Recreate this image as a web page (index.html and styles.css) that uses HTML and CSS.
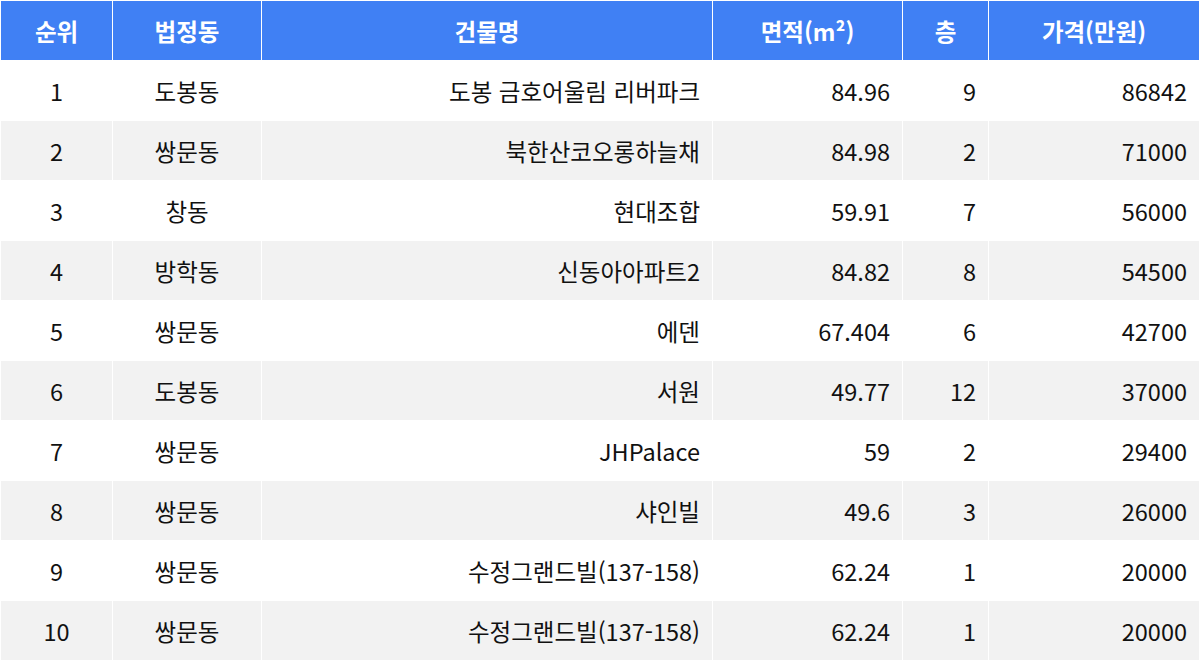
FILE: index.html
```html
<!DOCTYPE html>
<html lang="ko">
<head>
<meta charset="utf-8">
<link rel="stylesheet" href="styles.css">
</head>
<body>
<div class="table">
  <div class="th">순위</div><div class="th">법정동</div><div class="th">건물명</div><div class="th">면적(m²)</div><div class="th">층</div><div class="th">가격(만원)</div>

  <div class="td c">1</div><div class="td c">도봉동</div><div class="td r">도봉 금호어울림 리버파크</div><div class="td r">84.96</div><div class="td r">9</div><div class="td r">86842</div>
  <div class="td c alt">2</div><div class="td c alt">쌍문동</div><div class="td r alt">북한산코오롱하늘채</div><div class="td r alt">84.98</div><div class="td r alt">2</div><div class="td r alt">71000</div>
  <div class="td c">3</div><div class="td c">창동</div><div class="td r">현대조합</div><div class="td r">59.91</div><div class="td r">7</div><div class="td r">56000</div>
  <div class="td c alt">4</div><div class="td c alt">방학동</div><div class="td r alt">신동아아파트2</div><div class="td r alt">84.82</div><div class="td r alt">8</div><div class="td r alt">54500</div>
  <div class="td c">5</div><div class="td c">쌍문동</div><div class="td r">에덴</div><div class="td r">67.404</div><div class="td r">6</div><div class="td r">42700</div>
  <div class="td c alt">6</div><div class="td c alt">도봉동</div><div class="td r alt">서원</div><div class="td r alt">49.77</div><div class="td r alt">12</div><div class="td r alt">37000</div>
  <div class="td c">7</div><div class="td c">쌍문동</div><div class="td r">JHPalace</div><div class="td r">59</div><div class="td r">2</div><div class="td r">29400</div>
  <div class="td c alt">8</div><div class="td c alt">쌍문동</div><div class="td r alt">샤인빌</div><div class="td r alt">49.6</div><div class="td r alt">3</div><div class="td r alt">26000</div>
  <div class="td c">9</div><div class="td c">쌍문동</div><div class="td r">수정그랜드빌(137-158)</div><div class="td r">62.24</div><div class="td r">1</div><div class="td r">20000</div>
  <div class="td c alt">10</div><div class="td c alt">쌍문동</div><div class="td r alt">수정그랜드빌(137-158)</div><div class="td r alt">62.24</div><div class="td r alt">1</div><div class="td r alt">20000</div>
</div>
</body>
</html>
```
FILE: styles.css
```css
html, body {
  margin: 0;
  padding: 0;
  background: #ffffff;
}
body {
  font-family: "Noto Sans CJK KR", "Noto Sans", sans-serif;
  color: #111111;
}
.table {
  display: grid;
  grid-template-columns: 111px 148px 450px 189px 85px 210px;
  grid-auto-rows: 59px;
  gap: 1px;
  padding: 1px;
  background: #ffffff;
  width: 1200px;
  box-sizing: border-box;
}
.th {
  background: #4080f4;
  color: #ffffff;
  font-weight: 700;
  font-size: 23.5px;
  display: flex;
  align-items: center;
  justify-content: center;
}
.td {
  background: #ffffff;
  font-size: 23.5px;
  display: flex;
  align-items: center;
  padding: 0 12px;
}
.td.alt {
  background: #f2f2f2;
}
.c {
  justify-content: center;
}
.r {
  justify-content: flex-end;
}
```
